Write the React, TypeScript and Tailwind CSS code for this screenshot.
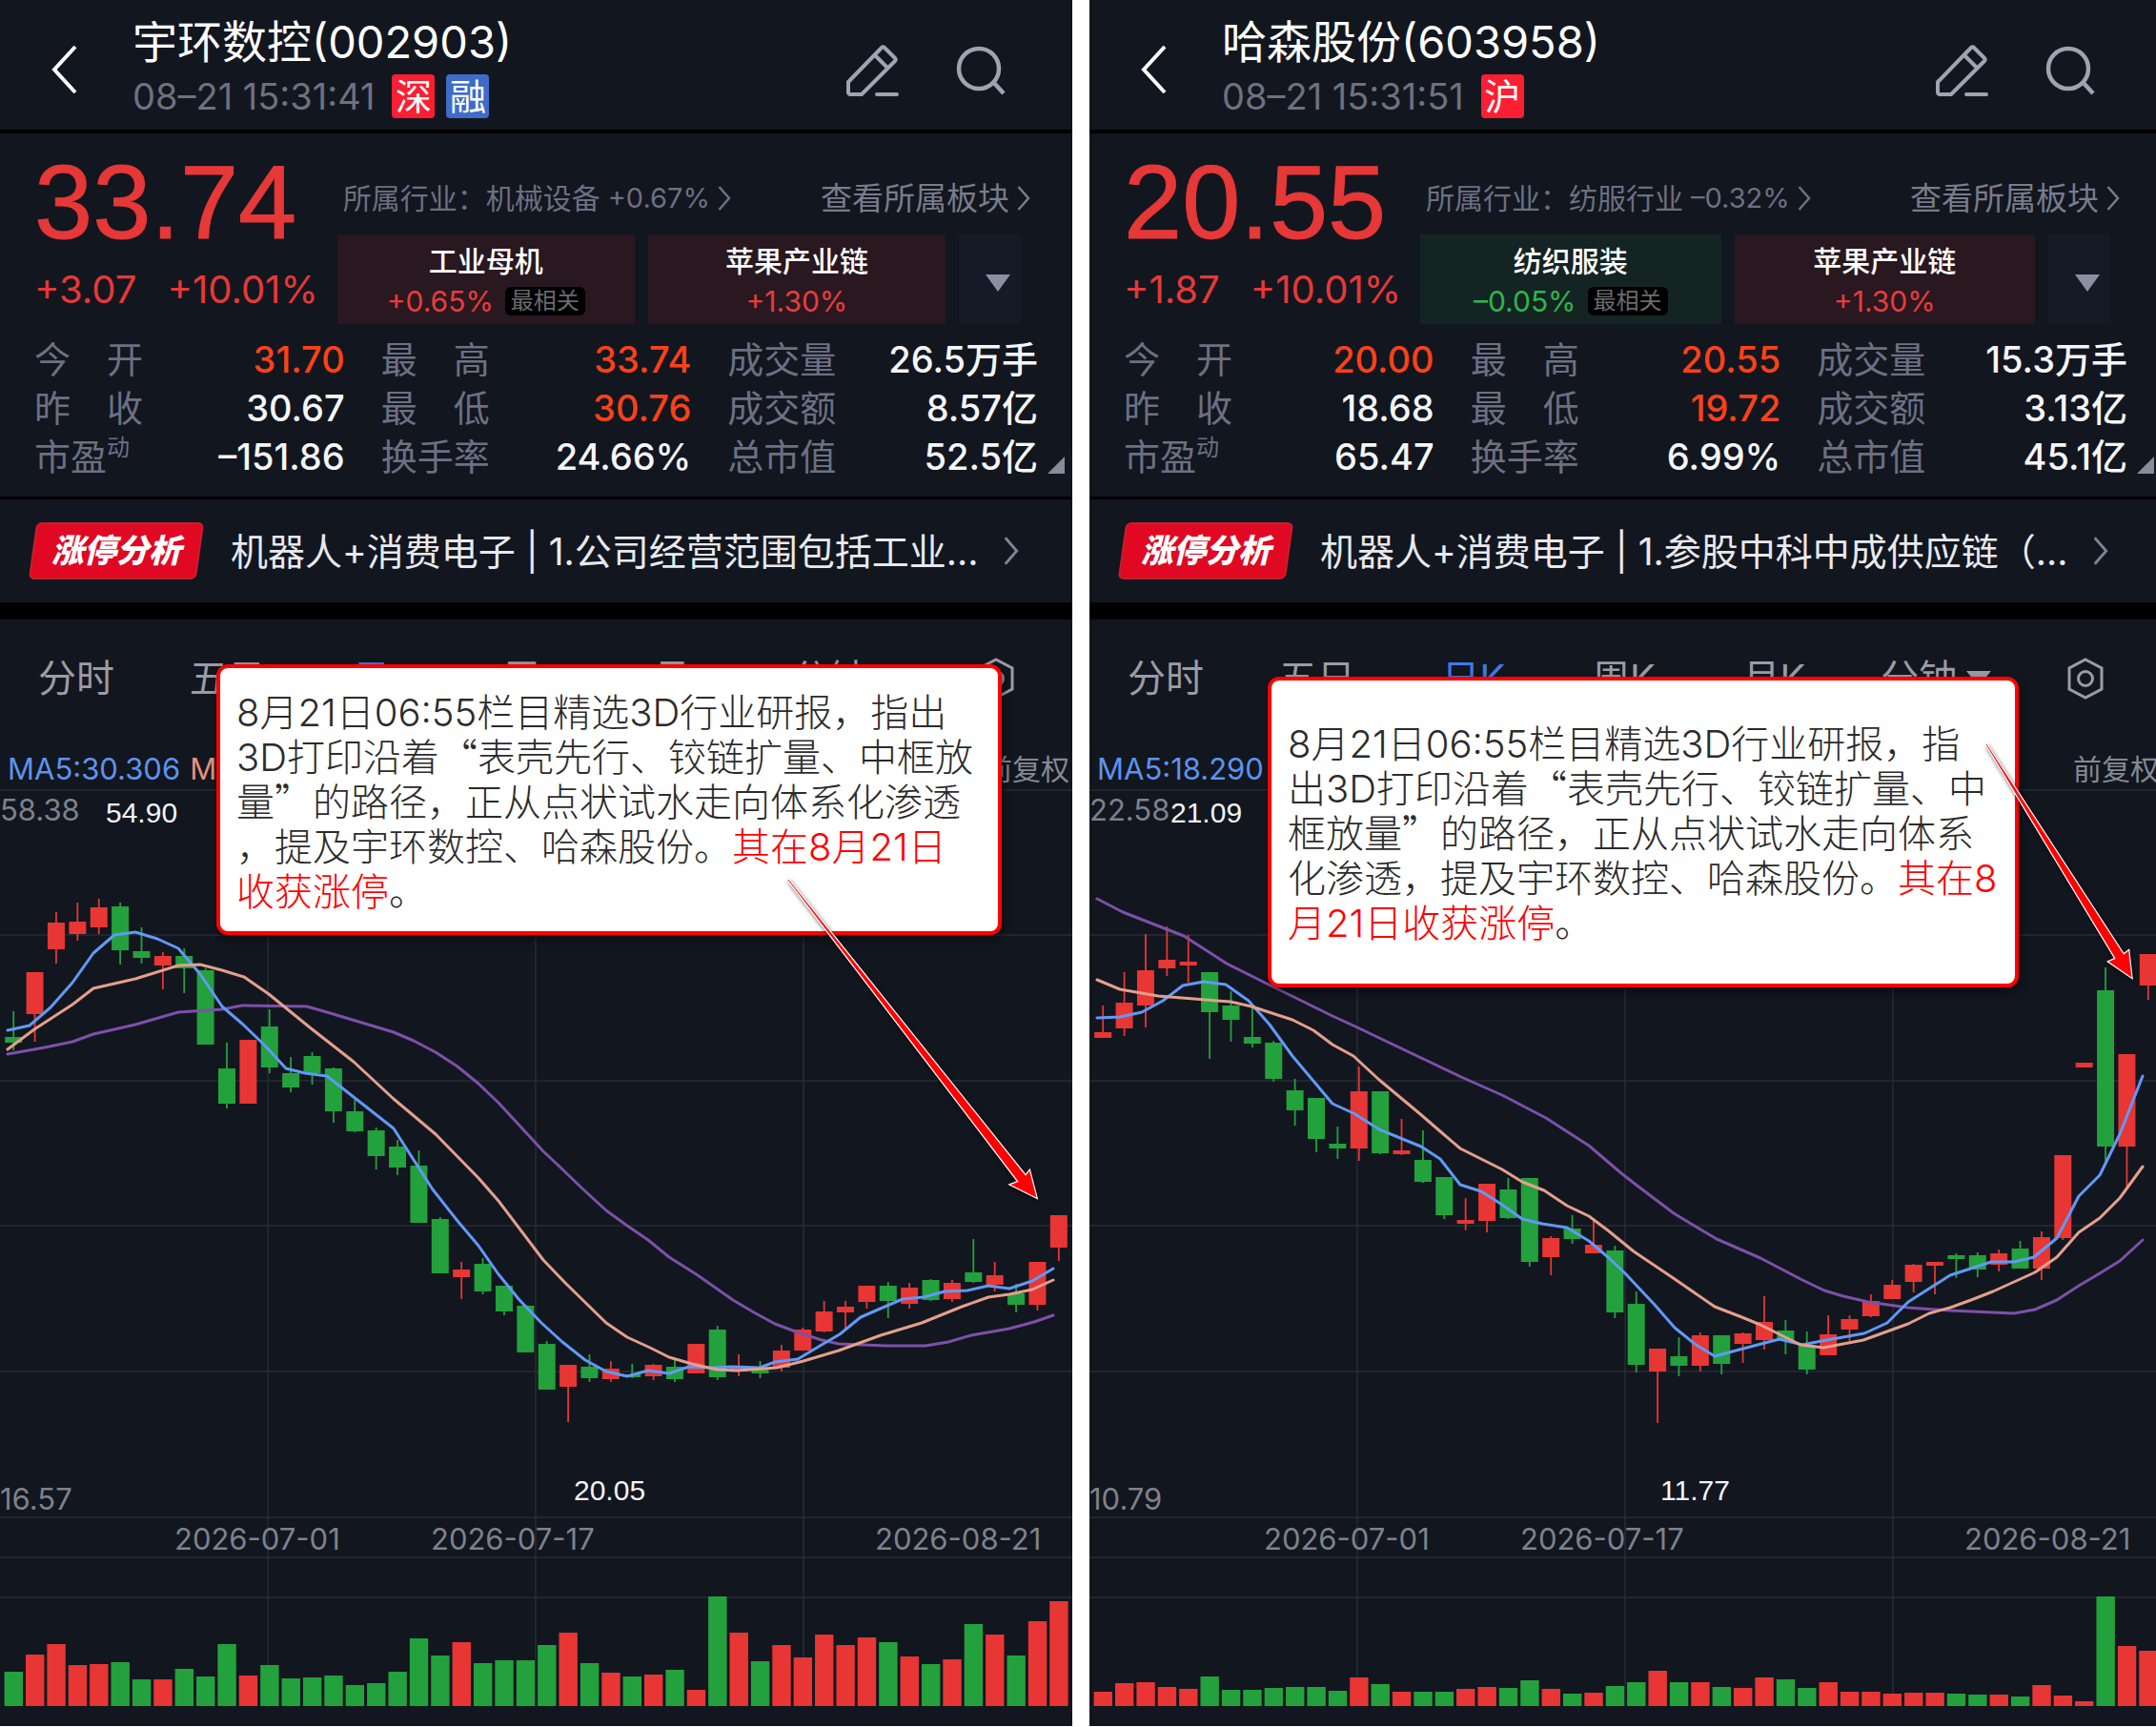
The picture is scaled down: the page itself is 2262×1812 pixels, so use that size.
import { ReactNode } from "react";

type Candle = [kind: "r" | "g", top: number, bottom: number, high: number, low: number, volume: number];

type Stat = { label: ReactNode; value: string; hot?: boolean };

type Sector = { name: string; change: string; tone: "up" | "down"; related?: boolean };

type Stock = {
  name: string;
  time: string;
  tags: { text: string; className: string }[];
  price: string;
  diff: string;
  percent: string;
  industry: string;
  industryChange: string;
  sectors: Sector[];
  stats: Stat[];
  analysis: string;
  ma5: string;
  axisTop: string;
  axisBottom: string;
  high: { x: number; text: string };
  low: { x: number; text: string };
  candles: Candle[];
  lines: { ma5: string; ma10: string; ma20: string };
};

const RED = "#e73634";
const GREEN = "#22a13c";

const peLabel = (
  <>
    市盈<sup className="top-0 align-top text-[24px] leading-8">动</sup>
  </>
);

const yuhuan: Stock = {
  name: "宇环数控(002903)",
  time: "08–21 15:31:41",
  tags: [
    { text: "深", className: "bg-[#fb1f33]" },
    { text: "融", className: "bg-[#3f6bc9]" },
  ],
  price: "33.74",
  diff: "+3.07",
  percent: "+10.01%",
  industry: "机械设备",
  industryChange: "+0.67%",
  sectors: [
    { name: "工业母机", change: "+0.65%", tone: "up", related: true },
    { name: "苹果产业链", change: "+1.30%", tone: "up" },
  ],
  stats: [
    { label: "今　开", value: "31.70", hot: true },
    { label: "最　高", value: "33.74", hot: true },
    { label: "成交量", value: "26.5万手" },
    { label: "昨　收", value: "30.67" },
    { label: "最　低", value: "30.76", hot: true },
    { label: "成交额", value: "8.57亿" },
    { label: peLabel, value: "–151.86" },
    { label: "换手率", value: "24.66%" },
    { label: "总市值", value: "52.5亿" },
  ],
  analysis: "机器人+消费电子 | 1.公司经营范围包括工业...",
  ma5: "MA5:30.306",
  axisTop: "58.38",
  axisBottom: "16.57",
  high: { x: 111, text: "54.90" },
  low: { x: 602, text: "20.05" },
  candles: [
    ["g", 260, 266, 233, 274, 36],
    ["r", 192, 236, 192, 265, 54],
    ["r", 140, 168, 129, 183, 65],
    ["r", 139, 152, 119, 159, 43],
    ["r", 124, 145, 115, 152, 44],
    ["g", 123, 169, 119, 184, 46],
    ["g", 170, 177, 145, 183, 28],
    ["r", 175, 185, 171, 210, 28],
    ["g", 175, 188, 167, 214, 39],
    ["g", 190, 268, 188, 268, 31],
    ["g", 293, 330, 266, 335, 65],
    ["r", 263, 330, 263, 330, 32],
    ["g", 249, 292, 231, 298, 43],
    ["g", 298, 313, 281, 318, 29],
    ["g", 280, 298, 276, 310, 30],
    ["g", 293, 338, 292, 350, 32],
    ["g", 338, 359, 326, 360, 22],
    ["g", 358, 385, 355, 399, 24],
    ["g", 375, 397, 368, 405, 36],
    ["g", 395, 455, 379, 455, 71],
    ["g", 451, 508, 449, 508, 53],
    ["r", 504, 512, 496, 535, 67],
    ["g", 498, 527, 492, 530, 45],
    ["g", 521, 548, 521, 552, 48],
    ["g", 542, 591, 541, 591, 48],
    ["g", 582, 630, 579, 630, 64],
    ["r", 604, 627, 604, 664, 77],
    ["g", 606, 618, 593, 622, 45],
    ["r", 608, 619, 600, 622, 35],
    ["g", 614, 617, 603, 618, 31],
    ["r", 604, 616, 603, 620, 33],
    ["g", 606, 619, 598, 622, 38],
    ["r", 582, 613, 582, 613, 17],
    ["g", 567, 617, 563, 620, 115],
    ["r", 607, 611, 593, 616, 77],
    ["g", 608, 613, 600, 618, 47],
    ["r", 589, 607, 583, 611, 64],
    ["r", 567, 589, 565, 589, 51],
    ["r", 548, 569, 537, 570, 75],
    ["r", 543, 549, 537, 567, 64],
    ["r", 521, 538, 521, 545, 72],
    ["g", 521, 537, 517, 555, 67],
    ["r", 523, 540, 518, 545, 52],
    ["g", 515, 536, 514, 537, 44],
    ["r", 518, 535, 515, 538, 49],
    ["g", 507, 517, 472, 518, 86],
    ["r", 510, 520, 496, 527, 75],
    ["g", 529, 541, 519, 549, 53],
    ["r", 496, 541, 496, 547, 89],
    ["r", 447, 481, 447, 495, 110],
  ],
  lines: {
    ma5: "8,253 31,248 53,229 76,203 98,172 120,153 142,150 165,157 187,167 210,194 233,228 254,246 277,268 300,293 320,298 343,301 371,323 413,356 434,389 454,420 480,453 502,479 523,509 545,536 568,560 590,580 614,599 636,611 658,616 680,610 702,613 723,606 745,607 769,606 797,607 813,601 837,598 862,583 881,572 903,554 926,544 947,535 969,533 991,527 1015,526 1037,521 1059,524 1083,516 1105,503",
    ma10: "8,273 36,252 76,226 98,209 142,199 187,185 210,184 233,190 256,197 282,215 325,250 371,286 413,325 457,362 502,408 523,432 570,494 593,518 636,560 658,575 682,586 702,596 726,603 752,609 773,610 815,607 843,600 880,589 924,573 967,560 1009,543 1037,533 1059,530 1083,525 1105,515",
    ma20: "8,278 47,271 76,265 98,257 142,247 187,234 233,231 254,227 322,228 343,234 393,249 413,255 434,264 457,276 480,291 502,309 523,329 570,380 586,395 612,420 636,442 658,458 680,473 702,491 732,510 769,536 791,549 813,561 837,570 862,578 880,582 930,584 971,584 995,580 1019,573 1059,566 1085,559 1105,552",
  },
};

const hasen: Stock = {
  name: "哈森股份(603958)",
  time: "08–21 15:31:51",
  tags: [{ text: "沪", className: "bg-[#fb1f33]" }],
  price: "20.55",
  diff: "+1.87",
  percent: "+10.01%",
  industry: "纺服行业",
  industryChange: "–0.32%",
  sectors: [
    { name: "纺织服装", change: "–0.05%", tone: "down", related: true },
    { name: "苹果产业链", change: "+1.30%", tone: "up" },
  ],
  stats: [
    { label: "今　开", value: "20.00", hot: true },
    { label: "最　高", value: "20.55", hot: true },
    { label: "成交量", value: "15.3万手" },
    { label: "昨　收", value: "18.68" },
    { label: "最　低", value: "19.72", hot: true },
    { label: "成交额", value: "3.13亿" },
    { label: peLabel, value: "65.47" },
    { label: "换手率", value: "6.99%" },
    { label: "总市值", value: "45.1亿" },
  ],
  analysis: "机器人+消费电子 | 1.参股中科中成供应链（...",
  ma5: "MA5:18.290",
  axisTop: "22.58",
  axisBottom: "10.79",
  high: { x: 85, text: "21.09" },
  low: { x: 599, text: "11.77" },
  candles: [
    ["r", 255, 261, 227, 261, 15],
    ["r", 224, 251, 192, 259, 24],
    ["r", 190, 227, 152, 250, 25],
    ["r", 179, 188, 144, 196, 20],
    ["r", 181, 185, 153, 203, 18],
    ["g", 192, 234, 192, 283, 31],
    ["g", 227, 242, 212, 265, 17],
    ["g", 260, 267, 228, 271, 17],
    ["g", 266, 304, 264, 307, 19],
    ["g", 316, 337, 304, 353, 20],
    ["g", 324, 367, 324, 381, 20],
    ["g", 372, 377, 354, 388, 16],
    ["r", 317, 377, 291, 390, 30],
    ["g", 317, 382, 317, 383, 23],
    ["r", 379, 383, 346, 384, 15],
    ["g", 389, 412, 358, 413, 15],
    ["g", 407, 447, 407, 451, 15],
    ["r", 452, 456, 429, 463, 18],
    ["r", 414, 453, 414, 465, 20],
    ["g", 420, 450, 408, 451, 19],
    ["g", 408, 496, 408, 501, 27],
    ["r", 471, 491, 469, 510, 18],
    ["g", 461, 472, 447, 477, 13],
    ["r", 478, 487, 453, 487, 14],
    ["g", 484, 549, 479, 555, 21],
    ["g", 540, 604, 527, 612, 25],
    ["r", 587, 611, 587, 665, 37],
    ["g", 595, 605, 575, 616, 25],
    ["r", 573, 605, 570, 611, 25],
    ["g", 573, 603, 573, 614, 20],
    ["r", 571, 582, 570, 602, 19],
    ["r", 559, 578, 532, 588, 30],
    ["g", 568, 579, 557, 593, 28],
    ["g", 583, 609, 569, 614, 19],
    ["r", 572, 594, 552, 594, 25],
    ["r", 556, 567, 552, 579, 15],
    ["r", 537, 553, 530, 554, 15],
    ["r", 520, 535, 515, 535, 13],
    ["r", 499, 517, 498, 528, 14],
    ["r", 496, 500, 496, 530, 14],
    ["g", 489, 493, 487, 513, 13],
    ["g", 489, 504, 486, 512, 12],
    ["r", 487, 499, 483, 506, 12],
    ["g", 482, 503, 474, 503, 10],
    ["r", 470, 503, 464, 515, 22],
    ["r", 384, 471, 384, 473, 11],
    ["r", 287, 292, 287, 292, 5],
    ["g", 211, 375, 187, 390, 115],
    ["r", 278, 375, 278, 417, 63],
    ["r", 173, 206, 173, 221, 58],
  ],
  lines: {
    ma5: "8,240 32,239 55,234 77,222 98,206 120,202 143,205 167,222 189,247 213,280 255,330 277,340 304,357 326,366 348,375 368,388 389,415 411,422 433,436 454,451 475,456 501,460 524,474 544,491 562,508 593,541 614,565 635,582 656,595 682,588 724,577 748,583 768,579 813,571 837,560 859,538 881,524 903,510 946,496 970,496 991,491 1015,471 1038,427 1060,405 1081,362 1105,301",
    ma10: "8,200 32,210 72,217 122,221 148,223 170,228 213,242 235,253 255,268 277,280 304,305 346,340 368,359 389,377 433,399 454,412 477,421 501,437 524,448 544,463 571,485 614,514 656,543 682,553 704,562 726,573 746,583 770,586 812,578 859,561 881,550 903,544 925,536 948,527 992,507 1015,491 1038,465 1060,450 1081,429 1105,396",
    ma20: "8,115 35,129 99,154 144,183 192,207 255,238 279,249 304,261 390,302 433,321 479,345 524,374 558,403 576,417 613,445 658,472 704,492 748,515 771,526 791,532 817,538 859,544 903,547 970,550 992,546 1015,536 1038,521 1060,508 1081,495 1105,473",
  },
};

const Chevron = ({ className }: { className: string }) => (
  <svg viewBox="0 0 14 26" fill="none" stroke="currentColor" strokeWidth="2.5" className={className}>
    <path d="M1.5 1 12 13 1.5 25" />
  </svg>
);

const StockHeader = ({ stock }: { stock: Stock }) => (
  <header className="flex items-center border-b-4 border-black pt-4 pb-3 pl-[54px] pr-[70px]">
    <button aria-label="返回" className="mr-[58px] pt-1.5 text-white">
      <svg viewBox="0 0 27 52" fill="none" stroke="currentColor" strokeWidth="4" className="h-[52px] w-[27px]">
        <path d="M25 2 3 26l22 24" />
      </svg>
    </button>
    <div className="flex-1">
      <h1 className="text-[47px] leading-[56px] text-white">{stock.name}</h1>
      <div className="mt-1.5 flex items-center gap-3 text-[38px] leading-[46px] text-[#6e7180]">
        <span className="mr-1.5">{stock.time}</span>
        {stock.tags.map((tag) => (
          <span key={tag.text} className={`w-[45px] rounded text-center text-white ${tag.className}`}>
            {tag.text}
          </span>
        ))}
      </div>
    </div>
    <div className="flex items-center gap-[60px] pt-2 text-[#a0a3b1]">
      <button aria-label="编辑">
        <svg viewBox="0 0 56 56" fill="none" stroke="currentColor" strokeWidth="4" strokeLinejoin="round" strokeLinecap="round" className="size-14">
          <path d="M3 40 38 4c1-1 2-1 3 0l11 11c1 1 1 2 0 3L17 53H5c-1 0-2-1-2-2zM31 12l13 13M33 53h21" />
        </svg>
      </button>
      <button aria-label="搜索">
        <svg viewBox="0 0 52 52" fill="none" stroke="currentColor" strokeWidth="4.5" className="size-[52px]">
          <circle cx="24" cy="24" r="21" />
          <path d="m39 38 11 12" />
        </svg>
      </button>
    </div>
  </header>
);

const SectorTile = ({ sector }: { sector: Sector }) => (
  <a
    href="#"
    className={`flex flex-1 flex-col items-center justify-center pt-1 ${sector.tone === "up" ? "bg-[#291820]" : "bg-[#132423]"}`}
  >
    <span className="text-[30px] leading-[42px] font-medium text-white">{sector.name}</span>
    <span className={`flex items-center gap-3 text-[30px] leading-[42px] ${sector.tone === "up" ? "text-[#e93c3c]" : "text-[#2fb549]"}`}>
      {sector.change}
      {sector.related && (
        <span className="rounded-md bg-black px-1.5 text-[24px] leading-[30px] text-[#6b6b6f]">最相关</span>
      )}
    </span>
  </a>
);

const Quote = ({ stock }: { stock: Stock }) => (
  <section className="relative border-b-[3px] border-black pt-[17px] pb-4">
    <div className="flex pl-9 pr-[54px]">
      <div className="mr-5 text-[#e73838]">
        <div className="font-['Liberation_Sans'] text-[110px] leading-[110px] [-webkit-text-stroke:1px]">{stock.price}</div>
        <div className="mt-[17px] flex gap-8 text-[40px] leading-10">
          <span>{stock.diff}</span>
          <span>{stock.percent}</span>
        </div>
      </div>
      <div className="flex-1 pt-[33px] text-[#6c7082]">
        <div className="flex items-center justify-between pl-1.5 leading-9">
          <a href="#" className="flex items-center text-[30px]">
            所属行业：{stock.industry}
            <span className="ml-2 text-[29px]">{stock.industryChange}</span>
            <Chevron className="ml-2 h-[26px] w-3.5" />
          </a>
          <a href="#" className="-mr-2.5 flex items-center text-[33px] text-[#787c8d]">
            查看所属板块
            <Chevron className="ml-2 h-[26px] w-3.5" />
          </a>
        </div>
        <div className="mt-5 flex h-[94px] gap-3.5">
          {stock.sectors.map((sector) => (
            <SectorTile key={sector.name} sector={sector} />
          ))}
          <button aria-label="更多板块" className="flex w-[65px] items-center justify-center bg-[#151a26] text-[#8b90a1]">
            <svg viewBox="0 0 26 18" fill="currentColor" className="mt-2 ml-4 h-[18px] w-[26px]">
              <path d="M0 0h26L13 18z" />
            </svg>
          </button>
        </div>
      </div>
    </div>
    <dl className="mt-3 grid grid-cols-3 gap-x-[38px] px-9 text-[38px] leading-[51px]">
      {stock.stats.map((stat, i) => (
        <div key={i} className="flex justify-between">
          <dt className="text-[#6c7083]">{stat.label}</dt>
          <dd className={`font-medium ${stat.hot ? "text-[#fa4119]" : "text-[#f5f6fa]"}`}>{stat.value}</dd>
        </div>
      ))}
    </dl>
    <svg viewBox="0 0 18 18" className="absolute right-2 bottom-6 size-[18px] fill-[#878c9b]">
      <path d="M18 0v18H0z" />
    </svg>
  </section>
);

const Analysis = ({ text }: { text: string }) => (
  <a href="#" className="flex items-center border-b-[18px] border-black py-6 pl-[30px] pr-14">
    <span className="relative isolate px-6 text-[34px] leading-[60px] font-black italic text-white before:absolute before:inset-x-1 before:inset-y-0 before:-z-10 before:-skew-x-8 before:rounded-md before:border-2 before:border-[#c81f2c] before:bg-[#e00822]">
      涨停分析
    </span>
    <span className="ml-7 flex-1 truncate pt-0.5 text-[39px] leading-[58px] text-[#e8e9ee]">{text}</span>
    <Chevron className="h-[30px] w-4 text-[#7f8495]" />
  </a>
);

const Tabs = () => (
  <nav className="flex items-center justify-between pt-[34px] pr-[60px] pl-10 text-[40px] leading-[56px] text-[#9a9ca6]">
    <button>分时</button>
    <button>五日</button>
    <button className="pl-3 text-[#3f7ae6]">日K</button>
    <button className="pl-3">周K</button>
    <button className="pl-3">月K</button>
    <button className="flex items-center gap-2.5">
      分钟
      <svg viewBox="0 0 26 16" fill="currentColor" className="h-4 w-[26px]">
        <path d="M0 0h26L13 16z" />
      </svg>
    </button>
    <button aria-label="设置">
      <svg viewBox="0 0 40 44" fill="none" stroke="currentColor" strokeWidth="3" className="h-11 w-10">
        <path d="M20 2 37 11v22L20 42 3 33V11z" />
        <circle cx="20" cy="22" r="7.5" />
      </svg>
    </button>
  </nav>
);

const PITCH = 22.38;
const VOLUME_BASE = 962;

const Chart = ({ stock }: { stock: Stock }) => (
  <svg viewBox="0 0 1125 983" className="block w-full" role="img" aria-label={stock.name}>
    <g stroke="#272b34" strokeWidth="1.5">
      {[1, 153, 306, 458, 611, 764, 806, 848].map((y) => (
        <path key={y} d={`M0 ${y}H1125`} />
      ))}
      {[281, 562, 843].map((x) => (
        <path key={x} d={`M${x} 153V962`} />
      ))}
    </g>
    {stock.candles.map(([kind, top, bottom, high, low, volume], i) => {
      const x = 14.2 + i * PITCH;
      return (
        <g key={i} fill={kind === "r" ? RED : GREEN}>
          <rect x={x - 0.9} y={high} width="1.8" height={low - high} />
          <rect x={x - 9} y={top} width="18" height={bottom - top} />
          <rect x={x - 9.6} y={VOLUME_BASE - volume} width="19.4" height={volume} />
        </g>
      );
    })}
    <g fill="none" strokeWidth="3" strokeLinejoin="round" strokeLinecap="round">
      <polyline points={stock.lines.ma20} stroke="#7d50a9" />
      <polyline points={stock.lines.ma5} stroke="#6199f5" />
      <polyline points={stock.lines.ma10} stroke="#e3a08c" />
    </g>
    <g className="fill-[#7d828d] font-[Inter] text-[31px]">
      <text x="0" y="33">{stock.axisTop}</text>
      <text x="0" y="756">{stock.axisBottom}</text>
      <text x="183" y="798">2026-07-01</text>
      <text x="452" y="798">2026-07-17</text>
      <text x="918" y="798">2026-08-21</text>
    </g>
    <g className="fill-[#f2f3f6] font-['Liberation_Sans'] text-[30px]">
      <text x={stock.high.x} y="35">{stock.high.text}</text>
      <text x={stock.low.x} y="746">{stock.low.text}</text>
    </g>
  </svg>
);

const Arrow = ({ points }: { points: string }) => (
  <svg viewBox="0 0 1125 1811" className="pointer-events-none absolute inset-x-0 top-0 w-full drop-shadow-[1px_2px_2px_rgba(0,0,0,0.6)]">
    <polygon points={points} fill="#ffffff" stroke="#ffffff" strokeWidth="3" />
    <polygon points={points} fill="#ff0000" stroke="#ff0000" strokeWidth="0.6" />
  </svg>
);

// Quotation marks take a full character cell, so they come from the CJK face
const Quoted = ({ children }: { children: ReactNode }) => (
  <span className="font-['Noto_Sans_CJK_SC',sans-serif] leading-none">{children}</span>
);

const Callout = ({ className, children }: { className: string; children: ReactNode }) => (
  <p
    className={`absolute rounded-xl border-4 border-[#ff0000] bg-white px-[17px] text-[40px] leading-[47px] font-light whitespace-nowrap text-[#2b2b2b] shadow-[2px_4px_8px_rgba(0,0,0,0.5)] ${className}`}
  >
    {children}
  </p>
);

const StockPanel = ({ stock, children }: { stock: Stock; children: ReactNode }) => (
  <article className="relative overflow-hidden bg-[#12161f]">
    <StockHeader stock={stock} />
    <Quote stock={stock} />
    <Analysis text={stock.analysis} />
    <Tabs />
    <div className="mt-[46px] flex justify-between pr-[3px] pl-2 text-[30px] leading-[42px]">
      <div className="flex gap-2.5">
        <span className="text-[31px] text-[#5e93ee]">{stock.ma5}</span>
        <span className="text-[31px] text-[#e3937f]">MA</span>
      </div>
      <span className="text-[#858995]">前复权</span>
    </div>
    <Chart stock={stock} />
    {children}
  </article>
);

const App = () => {
  return (
    <main className="overflow-hidden bg-white font-[Inter,'Noto_Sans_CJK_SC',sans-serif]">
      <div className="grid w-[calc(100%+6px)] grid-cols-2 gap-[18px]">
        <StockPanel stock={yuhuan}>
          <Callout className="top-[697px] left-[227px] w-[824px] pt-[23px] pb-[18px]">
            8月21日06:55栏目精选3D行业研报，指出
            <br />
            3D打印沿着<Quoted>“</Quoted>表壳先行、铰链扩量、中框放
            <br />量<Quoted>”</Quoted>的路径，正从点状试水走向体系化渗透
            <br />
            ，提及宇环数控、哈森股份。<span className="text-[#ff0000]">其在8月21日</span>
            <br />
            <span className="text-[#ff0000]">收获涨停</span>。
          </Callout>
          <Arrow points="827,923 1069,1240 1061,1243 1087,1256 1080,1229 1076,1234" />
        </StockPanel>
        <StockPanel stock={hasen}>
          <Callout className="top-[710px] left-[187px] w-[788px] pt-[43px] pb-10">
            8月21日06:55栏目精选3D行业研报，指
            <br />
            出3D打印沿着<Quoted>“</Quoted>表壳先行、铰链扩量、中
            <br />
            框放量<Quoted>”</Quoted>的路径，正从点状试水走向体系
            <br />
            化渗透，提及宇环数控、哈森股份。<span className="text-[#ff0000]">其在8</span>
            <br />
            <span className="text-[#ff0000]">月21日收获涨停</span>。
          </Callout>
          <Arrow points="941,781 1077,1006 1070,1009 1093,1025 1090,998 1085,1002" />
        </StockPanel>
      </div>
    </main>
  );
};

export default App;
